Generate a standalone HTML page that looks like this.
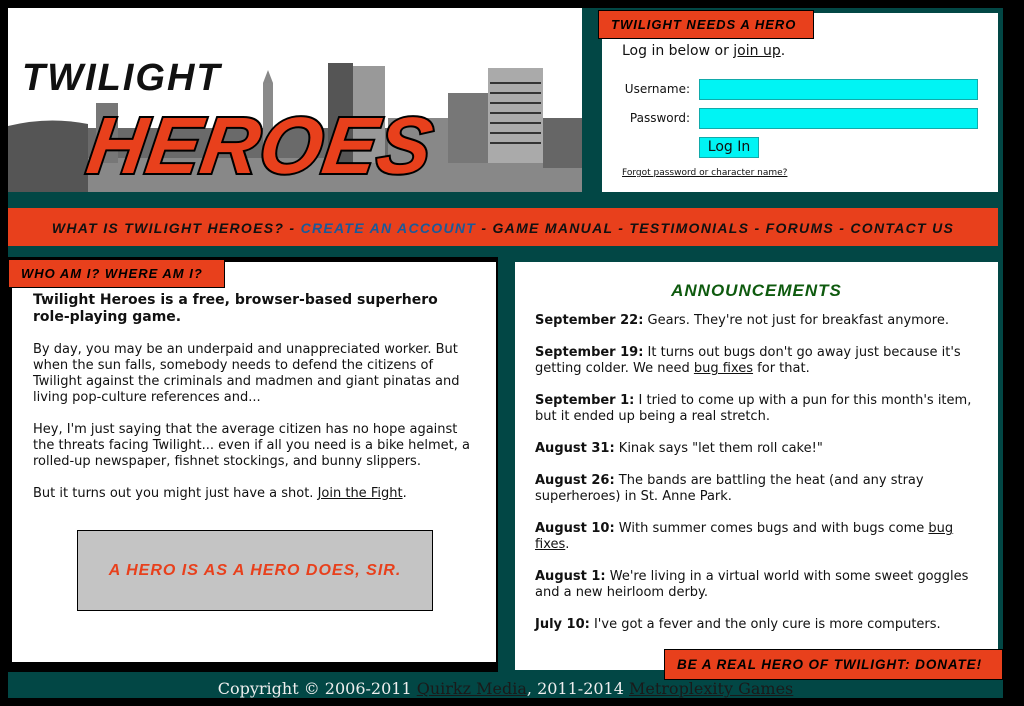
<!DOCTYPE html>
<html><head><meta charset="utf-8"><style>
*{margin:0;padding:0;box-sizing:border-box}
body{width:1024px;height:706px;background:#000;position:relative;overflow:hidden;font-family:"DejaVu Sans","Liberation Sans",sans-serif;font-size:13px;line-height:16px;color:#111}
.abs{position:absolute}
.comic{font-family:"Liberation Sans",sans-serif;font-weight:bold;font-style:italic;text-transform:uppercase;letter-spacing:1px;white-space:nowrap}
.tag{background:#e8401c;border:1px solid #000;color:#000;font-size:13px;line-height:27px;padding-left:12px;overflow:hidden}
a{color:inherit;text-decoration:underline}
input{position:absolute;background:#00f4f4;border:1px solid #1aa;}
p{margin-bottom:16px}
</style></head><body>
<div class="abs" style="left:8px;top:8px;width:995px;height:690px;background:#024745"></div>
<!-- header image -->
<div class="abs" style="left:8px;top:8px;width:574px;height:184px;background:#fff;overflow:hidden">
<svg width="574" height="184" viewBox="0 0 574 184">
<rect x="0" y="120" width="574" height="64" fill="#6a6a6a"/>
<rect x="0" y="150" width="574" height="34" fill="#888"/>
<path d="M0 118 Q40 108 80 116 L80 184 L0 184Z" fill="#555"/>
<rect x="88" y="95" width="22" height="60" fill="#777"/>
<rect x="255" y="75" width="10" height="80" fill="#8a8a8a"/>
<polygon points="255,75 260,62 265,75" fill="#888"/>
<rect x="320" y="55" width="25" height="100" fill="#555"/>
<rect x="345" y="58" width="32" height="97" fill="#999"/>
<rect x="380" y="110" width="60" height="45" fill="#888"/>
<rect x="440" y="85" width="40" height="70" fill="#777"/>
<rect x="480" y="60" width="55" height="95" fill="#aaa"/>
<g stroke="#333" stroke-width="2"><line x1="482" y1="75" x2="533" y2="75"/><line x1="482" y1="85" x2="533" y2="85"/><line x1="482" y1="95" x2="533" y2="95"/><line x1="482" y1="105" x2="533" y2="105"/><line x1="482" y1="115" x2="533" y2="115"/><line x1="482" y1="125" x2="533" y2="125"/><line x1="482" y1="135" x2="533" y2="135"/></g>
<rect x="535" y="110" width="39" height="50" fill="#666"/>
<text x="14" y="82" font-family="Liberation Sans" font-weight="bold" font-style="italic" font-size="38" fill="#111" letter-spacing="2">TWILIGHT</text>
<text x="80" y="165" font-family="Liberation Sans" font-weight="bold" font-style="italic" font-size="80" fill="#e8401c" stroke="#000" stroke-width="4" paint-order="stroke" letter-spacing="1" transform="skewX(-8) translate(20,0)">HEROES</text>
</svg></div>
<!-- login -->
<div class="abs" style="left:602px;top:13px;width:396px;height:179px;background:#fff"></div>
<div class="abs tag comic" style="left:598px;top:10px;width:216px;height:29px">Twilight Needs a Hero</div>
<div class="abs" style="left:622px;top:43px;font-size:14px">Log in below or <a>join up</a>.</div>
<div class="abs" style="left:600px;top:81px;width:90px;text-align:right;font-size:12px">Username:</div>
<div class="abs" style="left:600px;top:110px;width:90px;text-align:right;font-size:12px">Password:</div>
<input style="left:699px;top:79px;width:279px;height:21px">
<input style="left:699px;top:108px;width:279px;height:21px">
<div class="abs" style="left:699px;top:137px;width:60px;height:21px;background:#00f4f4;border:1px solid #1aa;text-align:center;font-size:14px;line-height:19px">Log In</div>
<div class="abs" style="left:622px;top:165px;font-size:9px"><a>Forgot password or character name?</a></div>
<!-- nav -->
<div class="abs comic" style="left:8px;top:208px;width:990px;height:38px;background:#e8401c;text-align:center;font-size:14px;line-height:40px;letter-spacing:1.3px">What is Twilight Heroes? - <span style="color:#1a5a9a">Create an Account</span> - Game Manual - Testimonials - Forums - Contact Us</div>
<!-- left -->
<div class="abs" style="left:8px;top:257px;width:490px;height:415px;background:#000"></div>
<div class="abs" style="left:12px;top:262px;width:484px;height:400px;background:#fff"></div>
<div class="abs tag comic" style="left:8px;top:259px;width:217px;height:29px">Who am I? Where am I?</div>
<div class="abs" style="left:33px;top:292px;width:445px">
<p style="width:405px"><b style="font-size:14px">Twilight Heroes is a free, browser-based superhero role-playing game.</b></p>
<p>By day, you may be an underpaid and unappreciated worker. But when the sun falls, somebody needs to defend the citizens of Twilight against the criminals and madmen and giant pinatas and living pop-culture references and...</p>
<p>Hey, I'm just saying that the average citizen has no hope against the threats facing Twilight... even if all you need is a bike helmet, a rolled-up newspaper, fishnet stockings, and bunny slippers.</p>
<p>But it turns out you might just have a shot. <a>Join the Fight</a>.</p>
</div>
<div class="abs comic" style="left:77px;top:530px;width:356px;height:81px;background:#c4c4c4;border:1px solid #000;color:#e8401c;text-align:center;line-height:80px;font-size:16px">A hero is as a hero does, sir.</div>
<!-- right -->
<div class="abs" style="left:515px;top:262px;width:483px;height:408px;background:#fff"></div>
<div class="abs comic" style="left:515px;top:280px;width:483px;text-align:center;color:#0e5a0e;font-size:17px;line-height:22px">Announcements</div>
<div class="abs" style="left:535px;top:313px;width:450px">
<p><b>September 22:</b> Gears. They're not just for breakfast anymore.</p>
<p><b>September 19:</b> It turns out bugs don't go away just because it's getting colder. We need <a>bug fixes</a> for that.</p>
<p><b>September 1:</b> I tried to come up with a pun for this month's item, but it ended up being a real stretch.</p>
<p><b>August 31:</b> Kinak says "let them roll cake!"</p>
<p><b>August 26:</b> The bands are battling the heat (and any stray superheroes) in St. Anne Park.</p>
<p><b>August 10:</b> With summer comes bugs and with bugs come <a>bug fixes</a>.</p>
<p><b>August 1:</b> We're living in a virtual world with some sweet goggles and a new heirloom derby.</p>
<p><b>July 10:</b> I've got a fever and the only cure is more computers.</p>
</div>
<div class="abs tag comic" style="left:664px;top:649px;width:339px;height:31px;line-height:30px;font-size:13.5px;letter-spacing:0.9px">Be a real hero of Twilight: Donate!</div>
<div class="abs" style="left:8px;top:679px;width:995px;text-align:center;font-family:'DejaVu Serif','Liberation Serif',serif;font-size:16px;line-height:20px;color:#eee">Copyright © 2006-2011 <a style="color:#1a1a1a">Quirkz Media</a>, 2011-2014 <a style="color:#1a1a1a">Metroplexity Games</a></div>
</body></html>
